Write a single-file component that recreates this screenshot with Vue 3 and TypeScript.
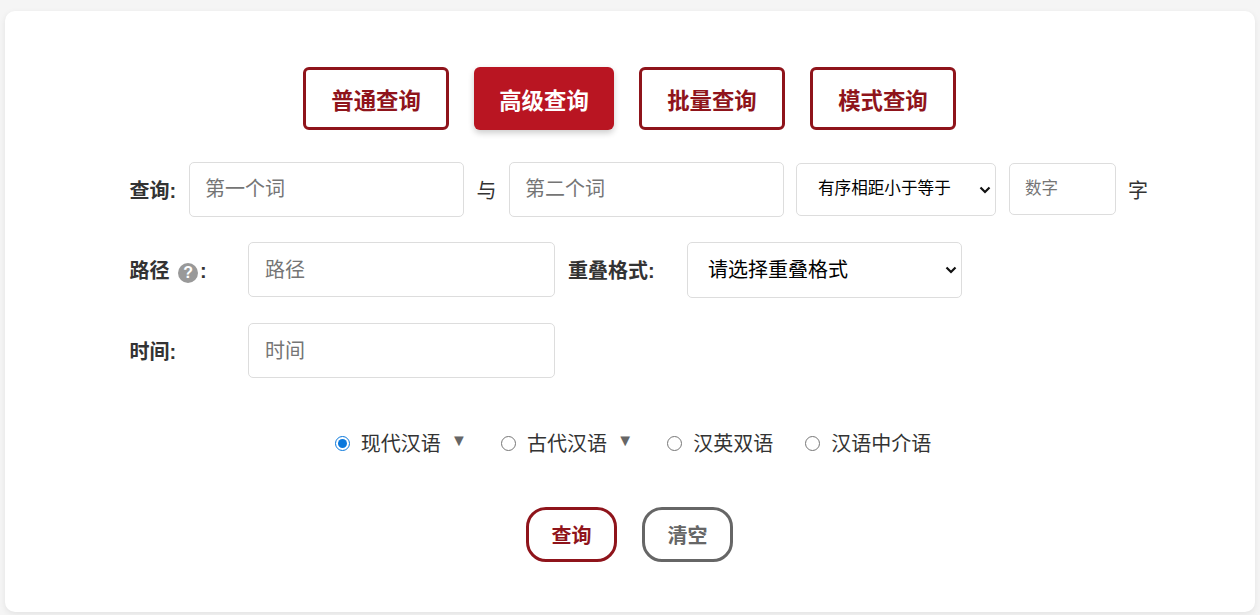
<script setup lang="ts">
const tabs = [
  { label: '普通查询', active: false },
  { label: '高级查询', active: true },
  { label: '批量查询', active: false },
  { label: '模式查询', active: false },
]
const corpora = [
  { label: '现代汉语', checked: true, arrow: true },
  { label: '古代汉语', checked: false, arrow: true },
  { label: '汉英双语', checked: false, arrow: false },
  { label: '汉语中介语', checked: false, arrow: false },
]
</script>

<template>
  <main class="card">
    <nav class="tabs">
      <button v-for="t in tabs" :key="t.label" class="tab" :class="{ active: t.active }">{{ t.label }}</button>
    </nav>

    <div class="row row-one">
      <label class="lbl lbl-query">查询:</label>
      <input class="field w-word" placeholder="第一个词" />
      <span class="plain conj">与</span>
      <input class="field w-word" placeholder="第二个词" />
      <div class="sel-wrap sel-dist">
        <select class="sel"><option>有序相距小于等于</option></select>
        <svg class="chev" viewBox="0 0 12 8" width="12" height="8"><path d="M1.5 1.5 6 6l4.5-4.5" fill="none" stroke="#111" stroke-width="2.2" /></svg>
      </div>
      <input class="field num" placeholder="数字" />
      <span class="plain unit">字</span>
    </div>

    <div class="row row-two">
      <label class="lbl lbl-wide">路径
        <span class="help">?</span>:</label>
      <input class="field w-path" placeholder="路径" />
      <label class="lbl lbl-overlap">重叠格式:</label>
      <div class="sel-wrap sel-overlap">
        <select class="sel"><option>请选择重叠格式</option></select>
        <svg class="chev" viewBox="0 0 12 8" width="12" height="8"><path d="M1.5 1.5 6 6l4.5-4.5" fill="none" stroke="#111" stroke-width="2.2" /></svg>
      </div>
    </div>

    <div class="row row-three">
      <label class="lbl lbl-wide">时间:</label>
      <input class="field w-path" placeholder="时间" />
    </div>

    <div class="radios">
      <label v-for="c in corpora" :key="c.label" class="radio" :class="{ 'has-arrow': c.arrow }">
        <input type="radio" name="corpus" :checked="c.checked" />
        <span class="radio-text">{{ c.label }}</span>
        <i v-if="c.arrow" class="arrow">▼</i>
      </label>
    </div>

    <div class="actions">
      <button class="act primary">查询</button>
      <button class="act ghost">清空</button>
    </div>
  </main>
</template>

<style>
html, body { margin: 0; background: #f5f5f5; }
</style>

<style scoped>
.card {
  box-sizing: border-box;
  width: 1250px;
  height: 601px;
  margin: 11px 5px 3px;
  padding-top: 56px;
  background: #fff;
  border-radius: 10px;
  box-shadow: 0 2px 6px rgba(0, 0, 0, 0.08);
  font-family: "Liberation Sans", "Noto Sans CJK SC", sans-serif;
  color: #333;
}
.tabs { display: flex; justify-content: center; gap: 25.4px; padding-right: 1px; }
.tab {
  box-sizing: border-box;
  height: 63px;
  padding: 0 25px;
  border: 3px solid #8f141b;
  border-radius: 6px;
  background: #fff;
  color: #8f141b;
  font: bold 22.4px "Liberation Sans", "Noto Sans CJK SC", sans-serif;
}
.tab.active {
  border: 0;
  background: #b91522;
  color: #fff;
  box-shadow: 0 3px 6px rgba(0, 0, 0, 0.2);
}
.row { display: flex; align-items: center; padding-left: 125px; }
.row-one { margin-top: 32px; height: 55px; }
.row-two { margin-top: 25px; height: 55px; }
.row-three { margin-top: 26px; height: 55px; }
.lbl { font-size: 20px; font-weight: bold; color: #333; white-space: nowrap; margin-left: -0.5px; }
.lbl-query { width: 59.5px; }
.lbl-wide { width: 118.5px; }
.lbl-overlap { width: 119px; margin-left: 13px; }
.field {
  box-sizing: border-box;
  height: 55px;
  padding: 0 15px;
  border: 1px solid #ddd;
  border-radius: 5px;
  font: 20px "Liberation Sans", "Noto Sans CJK SC", sans-serif;
  color: #333;
  background: #fff;
  outline: none;
}
.field::placeholder { color: #757575; }
.w-word { width: 275px; }
.w-path { width: 307px; padding: 2px 0 0 16px; }
.num { width: 107px; height: 52px; font-size: 16.5px; margin: 0 0 2px 13px; }
.plain { font-size: 20px; color: #333; }
.conj { width: 45px; padding-left: 12.5px; box-sizing: border-box; }
.unit { margin-left: 12px; }
.sel-wrap { position: relative; display: flex; }
.sel {
  box-sizing: border-box;
  width: 100%;
  height: 100%;
  appearance: none;
  border: 1px solid #ddd;
  border-radius: 5px;
  background: #fff;
  color: #000;
  font-family: "Liberation Sans", "Noto Sans CJK SC", sans-serif;
  outline: none;
}
.chev { position: absolute; right: 5px; top: 50%; margin-top: -4px; pointer-events: none; }
.sel-dist { width: 200px; height: 53px; margin-left: 12px; }
.sel-dist .sel { padding: 0 0 2px 21px; font-size: 16.6px; }
.sel-overlap { width: 275px; height: 56px; }
.sel-overlap .sel { padding: 0 0 0 20px; font-size: 20px; }
.help {
  display: inline-block;
  width: 20px;
  height: 20px;
  margin: 0 2px 0 3px;
  border-radius: 50%;
  background: #999;
  color: #fff;
  font-size: 16px;
  line-height: 20px;
  text-align: center;
  vertical-align: 0;
}
.radios { display: flex; justify-content: center; align-items: center; margin-top: 50px; padding-left: 6px; height: 30px; font-size: 20px; color: #333; }
.radio { display: flex; align-items: center; margin-right: 32px; }
.radio.has-arrow { margin-right: 34px; }
.radio:last-child { margin-right: 0; }
.radio input { width: 15px; height: 15px; margin: 0 11px 0 0; accent-color: #0a78dc; }
.radio-text { margin-bottom: 2px; }
.arrow { font-style: normal; font-size: 16.5px; line-height: 20px; color: #666; margin: -6px 0 0 10px; }
.actions { display: flex; justify-content: center; gap: 25px; margin-top: 49px; padding-right: 1px; }
.act {
  box-sizing: border-box;
  width: 91px;
  height: 55px;
  border-radius: 20px;
  background: #fff;
  font: bold 20px "Liberation Sans", "Noto Sans CJK SC", sans-serif;
}
.primary { border: 3px solid #8f141b; color: #8f141b; }
.ghost { border: 3px solid #666; color: #666; }
</style>
